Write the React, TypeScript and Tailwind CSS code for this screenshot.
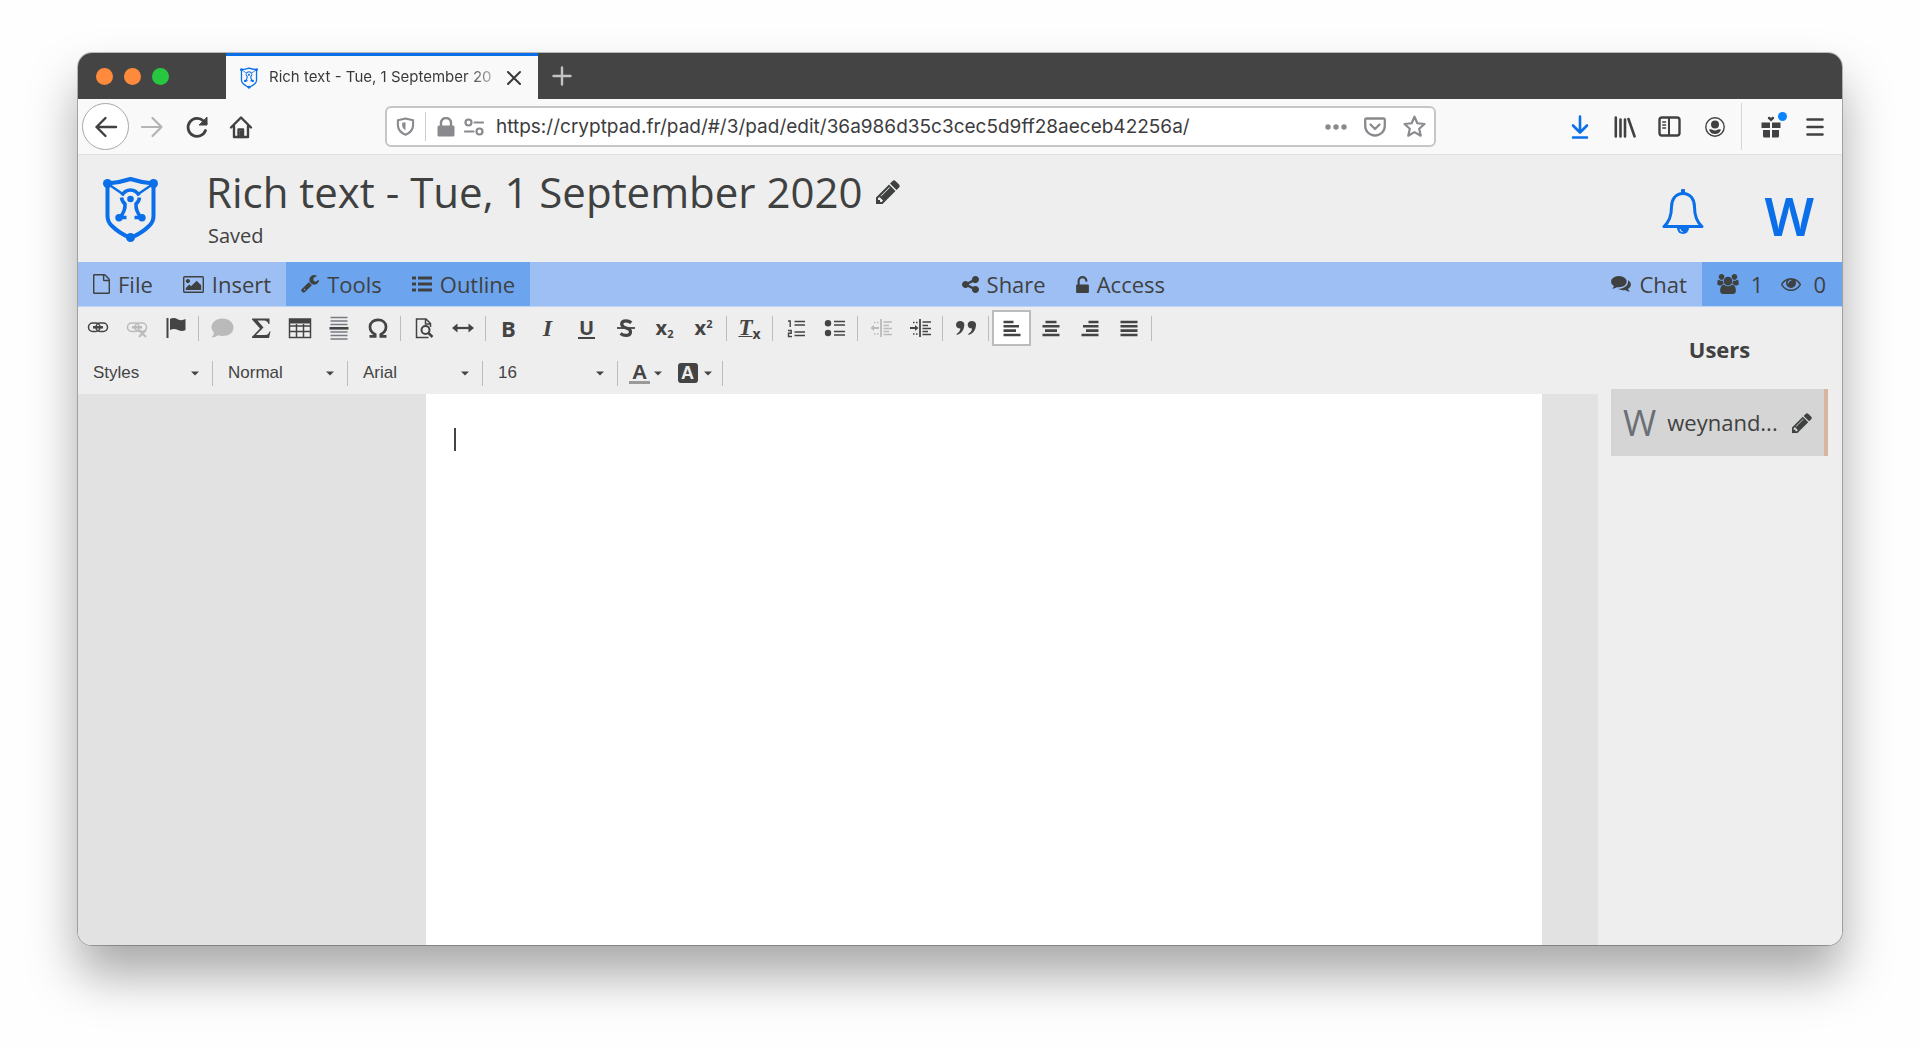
import React from "react";

type IconProps = { vb: string; d: string; cls: string };
const Glyph = ({ vb, d, cls }: IconProps) => (
  <svg viewBox={vb} className={cls} fill="currentColor" aria-hidden="true">
    <path d={d} />
  </svg>
);

const P = {
  pencil:
    "M491 1536l91-91-235-235-91 91v107h128v128h107zM1014 608q0-22-22-22-10 0-17 7l-542 542q-7 7-7 17 0 22 22 22 10 0 17-7l542-542q7-7 7-17zM960 416l416 416-832 832h-416v-416zM1643 512q0 53-37 90l-166 166-416-416 166-165q36-38 90-38 53 0 91 38l235 234q37 39 37 91z",
  file: "M1596 380q28 28 48 76t20 88v1152q0 40-28 68t-68 28h-1344q-40 0-68-28t-28-68v-1600q0-40 28-68t68-28h896q40 0 88 20t76 48zm-444-244v376h376q-10-29-22-41l-313-313q-12-12-41-22zm384 1528v-1024h-416q-40 0-68-28t-28-68v-416h-768v1536h1280z",
  picture:
    "M576 576q0 80-56 136t-136 56-136-56-56-136 56-136 136-56 136 56 56 136zm1024 384v448h-1408v-192l320-320 160 160 512-512zm96-704h-1600q-13 0-22.5 9.5t-9.5 22.5v1216q0 13 9.5 22.5t22.5 9.5h1600q13 0 22.5-9.5t9.5-22.5v-1216q0-13-9.5-22.5t-22.5-9.5zm160 32v1216q0 66-47 113t-113 47h-1600q-66 0-113-47t-47-113v-1216q0-66 47-113t113-47h1600q66 0 113 47t47 113z",
  wrench:
    "M448 1472q0-26-19-45t-45-19-45 19-19 45 19 45 45 19 45-19 19-45zm644-420l-682 682q-37 37-90 37-52 0-91-37l-106-108q-38-36-38-90 0-53 38-91l681-681q39 98 114.5 173.5t173.5 114.5zm634-435q0 39-23 106-47 134-164.5 217.5t-258.5 83.5q-185 0-316.5-131.5t-131.5-316.5 131.5-316.5 316.5-131.5q58 0 121.5 16.5t107.5 46.5q16 11 16 28t-16 28l-293 169v224l193 107q5-3 79-48.5t135.5-81 70.5-35.5q15 0 23.5 10t8.5 25z",
  share:
    "M1344 1024q133 0 226.5 93.5t93.5 226.5-93.5 226.5-226.5 93.5-226.5-93.5-93.5-226.5q0-12 2-34l-360-180q-92 86-218 86-133 0-226.5-93.5t-93.5-226.5 93.5-226.5 226.5-93.5q126 0 218 86l360-180q-2-22-2-34 0-133 93.5-226.5t226.5-93.5 226.5 93.5 93.5 226.5-93.5 226.5-226.5 93.5q-126 0-218-86l-360 180q2 22 2 34t-2 34l360 180q92-86 218-86z",
  unlock:
    "M1376 768q40 0 68 28t28 68v576q0 40-28 68t-68 28h-960q-40 0-68-28t-28-68v-576q0-40 28-68t68-28h32v-320q0-185 131.5-316.5t316.5-131.5 316.5 131.5 131.5 316.5q0 26-19 45t-45 19h-64q-26 0-45-19t-19-45q0-106-75-181t-181-75-181 75-75 181v320h736z",
  eye: "M1664 960q-152-236-381-353 61 104 61 225 0 185-131.5 316.5t-316.5 131.5-316.5-131.5-131.5-316.5q0-121 61-225-229 117-381 353 133 205 333.5 326.5t434.5 121.5 434.5-121.5 333.5-326.5zm-720-384q0-20-14-34t-34-14q-125 0-214.5 89.5t-89.5 214.5q0 20 14 34t34 14 34-14 14-34q0-86 61-147t147-61q20 0 34-14t14-34zm848 384q0 34-20 69-140 230-376.5 368.5t-499.5 138.5-499.5-139-376.5-368q-20-35-20-69t20-69q140-229 376.5-368t499.5-139 499.5 139 376.5 368q20 35 20 69z",
  users:
    "M529 896q-162 5-265 128h-134q-82 0-138-40.5t-56-118.5q0-353 124-353 6 0 43.5 21t97.5 42.5 119 21.5q67 0 133-23-5 37-5 66 0 139 81 256zm1071 637q0 120-73 189.5t-194 69.5h-874q-121 0-194-69.5t-73-189.5q0-53 3.5-103.5t14-109 26.5-108.5 43-97.5 62-81 85.5-53.5 111.5-20q10 0 43 21.5t73 48 107 48 135 21.5 135-21.5 107-48 73-48 43-21.5q61 0 111.5 20t85.5 53.5 62 81 43 97.5 26.5 108.5 14 109 3.5 103.5zm-1024-1277q0 106-75 181t-181 75-181-75-75-181 75-181 181-75 181 75 75 181zm704 384q0 159-112.5 271.5t-271.5 112.5-271.5-112.5-112.5-271.5 112.5-271.5 271.5-112.5 271.5 112.5 112.5 271.5zm576 225q0 78-56 118.5t-138 40.5h-134q-103-123-265-128 81-117 81-256 0-29-5-66 66 23 133 23 59 0 119-21.5t97.5-42.5 43.5-21q124 0 124 353zm-128-609q0 106-75 181t-181 75-181-75-75-181 75-181 181-75 181 75 75 181z",
  comments:
    "M1408 768q0 139-94 257t-256.5 186.5-353.5 68.5q-86 0-176-16-124 88-278 128-36 9-86 16h-3q-11 0-20.5-8t-11.5-21q-1-3-1-6.5t.5-6.5 2-6l2.5-5 3.5-5.5 4-5 4.5-5 4-4.5q5-6 23-25t26-29.5 22.5-29 25-38.5 20.5-44q-124-72-195-177t-71-224q0-139 94-257t256.5-186.5 353.5-68.5 353.5 68.5 256.5 186.5 94 257zm384 256q0 120-71 224.5t-195 176.5q10 24 20.5 44t25 38.5 22.5 29 26 29.5 23 25q1 1 4 4.5t4.5 5 4 5 3.5 5.5l2.5 5 2 6 .5 6.5-1 6.5q-3 14-13 22t-22 7q-50-7-86-16-154-40-278-128-90 16-176 16-271 0-472-132 58 4 88 4 161 0 309-45t264-129q125-92 192-212t67-254q0-77-23-152 129 71 204 178t75 230z",
};

const ShieldLogo = ({ cls }: { cls: string }) => (
  <svg viewBox="0 0 55 66" className={cls} fill="none" stroke="currentColor" aria-hidden="true">
    <path d="M4.500 7.500 Q17 6.500 27.500 3 Q38 6.500 50.500 7.500 V40 Q50.500 46 46 50 Q39 57 27.500 62 Q16 57 9 50 Q4.500 46 4.500 40 Z" strokeWidth="4" strokeLinejoin="round" />
    <path d="M5 8 L20.500 18.500 M50 8 L34.500 18.500" strokeWidth="2.400" />
    <path d="M19 19.500 Q22 14 27.500 14 Q33 14 36 19.500" strokeWidth="3.400" />
    <path d="M18.500 21.500 Q19 25.500 22 28 Q22.500 35 17 41.500 H23.500 M36.500 21.500 Q36 25.500 33 28 Q32.500 35 38 41.500 H31.500" strokeWidth="3.600" strokeLinejoin="round" />
    <g fill="currentColor" stroke="none">
      <circle cx="4.500" cy="7.500" r="4.500" />
      <circle cx="50.500" cy="7.500" r="4.500" />
      <circle cx="27.500" cy="61.500" r="4.500" />
      <circle cx="27.500" cy="23" r="3.300" />
      <circle cx="16" cy="41.800" r="3.700" />
      <circle cx="39" cy="41.800" r="3.700" />
    </g>
  </svg>
);

const Stroke = ({ d, cls, w = 2, vb = "0 0 24 24", children }: { d?: string; cls: string; w?: number; vb?: string; children?: React.ReactNode }) => (
  <svg viewBox={vb} className={cls} fill="none" stroke="currentColor" strokeWidth={w} strokeLinecap="round" strokeLinejoin="round" aria-hidden="true">
    {d && <path d={d} />}
    {children}
  </svg>
);

const NavButton = ({ label, children, cls = "w-[45px]" }: { label: string; children: React.ReactNode; cls?: string }) => (
  <button type="button" aria-label={label} className={`flex h-10 shrink-0 items-center justify-center ${cls}`}>
    {children}
  </button>
);

const TabBar = () => (
  <div className="flex h-[46px] shrink-0 bg-[#444444]">
    <div className="flex w-[148px] shrink-0 items-center gap-[11px] pl-[18px]">
      <span className="size-[17px] rounded-full bg-[#ff8a3c]" />
      <span className="size-[17px] rounded-full bg-[#ff8a3c]" />
      <span className="size-[17px] rounded-full bg-[#27c840]" />
    </div>
    <div className="flex w-[312px] shrink-0 items-center border-t-3 border-[#0a6fe8] bg-[#f9f9f9] pl-[14px] text-[#38383a]">
      <ShieldLogo cls="h-[22px] w-[18px] shrink-0 text-[#0a6fe8]" />
      <span className="ml-[11px] w-[232px] shrink-0 bg-linear-to-r from-[#38383a] from-85% to-[#d8d8d8] bg-clip-text text-[15px] whitespace-nowrap text-transparent">
        Rich text - Tue, 1 September 20
      </span>
      <button type="button" aria-label="Close tab" className="ml-1">
        <Stroke cls="size-[18px]" vb="0 0 18 18" d="M3 3 L15 15 M15 3 L3 15" />
      </button>
    </div>
    <button type="button" aria-label="New tab" className="ml-[14px] text-[#c4c4c4]">
      <Stroke cls="size-5" vb="0 0 20 20" w={2.4} d="M10 1.500 V18.500 M1.500 10 H18.500" />
    </button>
  </div>
);

const AddressBar = () => (
  <div className="flex h-14 shrink-0 items-center border-b border-[#e0e0e0] bg-[#f9f9f9] text-[#414143]">
    <div className="flex w-[307px] shrink-0 items-center pl-1">
      <button type="button" aria-label="Back" className="flex size-[47px] items-center justify-center rounded-full border border-[#a8a8a8] bg-white">
        <Stroke cls="size-6" w={2.4} d="M22 12 H2.500 M11.500 3 L2.500 12 L11.500 21" />
      </button>
      <NavButton label="Forward">
        <Stroke cls="size-6 text-[#b4b4b6]" w={2.2} d="M2 12 H21.500 M12.500 3 L21.500 12 L12.500 21" />
      </NavButton>
      <NavButton label="Reload">
        <Stroke cls="size-6" w={2.8} d="M20.500 15.500 A9 9 0 1 1 18.500 6 L21 8.500">
          <path d="M22 2.500 V10 H14.500 Z" fill="currentColor" strokeWidth="1" />
        </Stroke>
      </NavButton>
      <NavButton label="Home" cls="w-[43px]">
        <Stroke cls="size-6" w={2.4} d="M2 12.500 L12 2.500 L22 12.500 M5 11 V22 H19 V11">
          <path d="M9.500 22 V14.500 H14 V22 M12 17 V22" />
        </Stroke>
      </NavButton>
    </div>
    <div className="flex h-[41px] min-w-0 flex-1 items-center rounded-md border-2 border-[#c6c6c6] bg-white text-[#8a8a8e]">
      <Stroke cls="ml-[9px] size-[19px] shrink-0" vb="0 0 20 20" w={2.2} d="M10 1.500 L18 3.500 V9 Q17.500 15.500 10 18.700 Q2.500 15.500 2 9 V3.500 Z">
        <path d="M10 5.500 V14 Q6.500 12 6.500 9 V6 Z" fill="currentColor" stroke="none" />
      </Stroke>
      <span className="ml-[10px] h-[29px] w-px bg-[#cfcfcf]" />
      <svg viewBox="0 0 18 20" className="ml-[11px] h-5 w-[18px] shrink-0" fill="currentColor" aria-hidden="true">
        <rect x="0.500" y="8.500" width="17" height="11" rx="1.500" />
        <path d="M4 9 V6 A5 5 0 0 1 14 6 V9" fill="none" stroke="currentColor" strokeWidth="2.400" />
      </svg>
      <Stroke cls="ml-[9px] h-[18px] w-5 shrink-0" vb="0 0 20 18" w={2.2} d="M10.500 4.500 H19 M1 13.500 H9.500">
        <circle cx="4.500" cy="4.500" r="3" />
        <circle cx="15.500" cy="13.500" r="3" />
      </Stroke>
      <input
        aria-label="Address"
        readOnly
        value="https://cryptpad.fr/pad/#/3/pad/edit/36a986d35c3cec5d9ff28aeceb42256a/"
        className="ml-3 min-w-0 flex-1 bg-transparent pt-[2px] text-[19px] text-[#3c3c3e] outline-none"
      />
      <div className="flex items-center gap-[17px] pr-2">
        <button type="button" aria-label="Page actions">
          <svg viewBox="0 0 22 6" className="h-[6px] w-[22px]" fill="currentColor">
            <circle cx="3" cy="3" r="2.700" />
            <circle cx="11" cy="3" r="2.700" />
            <circle cx="19" cy="3" r="2.700" />
          </svg>
        </button>
        <button type="button" aria-label="Save to Pocket">
          <Stroke cls="h-5 w-[22px]" vb="0 0 22 20" w={2.3} d="M2.500 1.500 H19.500 Q20.800 1.500 20.800 3 V9 A9.800 9.500 0 0 1 1.200 9 V3 Q1.200 1.500 2.500 1.500 Z M6.500 7.500 L11 12 L15.500 7.500" />
        </button>
        <button type="button" aria-label="Bookmark this page">
          <Stroke cls="size-[23px]" w={2.3} d="M12 1.800 L15 8.600 L22.400 9.400 L16.900 14.300 L18.500 21.600 L12 17.900 L5.500 21.600 L7.100 14.300 L1.600 9.400 L9 8.600 Z" />
        </button>
      </div>
    </div>
    <div className="flex shrink-0 items-center pl-[121px]">
      <NavButton label="Downloads">
        <Stroke cls="h-6 w-[18px] text-[#0a6fe8]" vb="0 0 18 24" w={2.6} d="M9 1.500 V17 M2 10.500 L9 17.500 L16 10.500 M2 22.500 H16" />
      </NavButton>
      <NavButton label="Library">
        <Stroke cls="h-[22px] w-[22px]" vb="0 0 22 22" w={2.6} d="M1.800 1.500 V20.500 M6.500 3.500 V20.500 M11 3.500 V20.500 M14.500 3 L20.500 20.300" />
      </NavButton>
      <NavButton label="Sidebars">
        <Stroke cls="h-[21px] w-[23px]" vb="0 0 23 21" w={2.4}>
          <rect x="1.500" y="1.500" width="20" height="18" rx="2.500" />
          <path d="M11 2 V19" strokeWidth="2" />
          <path d="M4.800 6 H7.500 M4.800 9 H7.500 M4.800 12 H7.500" strokeWidth="1.500" />
        </Stroke>
      </NavButton>
      <NavButton label="Account">
        <svg viewBox="0 0 20 20" className="size-5" fill="currentColor">
          <circle cx="10" cy="10" r="9.200" fill="none" stroke="currentColor" strokeWidth="1.400" />
          <circle cx="10" cy="7.500" r="4" />
          <path d="M4 12.500 Q6 12 7 12.500 Q10 14.300 13 12.500 Q14 12 16 12.500 Q14.500 17 10 17 Q5.500 17 4 12.500 Z" />
        </svg>
      </NavButton>
      <span className="ml-[4px] h-[47px] w-px bg-[#d6d6d6]" />
      <button type="button" aria-label="What's new" className="relative ml-[19px] h-[22px] w-5">
        <svg viewBox="0 0 20 22" className="h-[22px] w-5" fill="currentColor">
          <path d="M0.500 6.500 H9 V12 H0.500 Z M11 6.500 H19.500 V12 H11 Z M2 14 H9 V21.500 H3.500 Q2 21.500 2 20 Z M11 14 H18 V20 Q18 21.500 16.500 21.500 H11 Z" />
          <path d="M10 5.500 L6.800 2.600 Q6.500 0.500 8.500 0.800 Q9.500 1 10 2 Q10.500 1 11.500 0.800 Q13.500 0.500 13.200 2.600 Z" />
        </svg>
        <span className="absolute -top-1 -right-[6px] size-[9px] rounded-full bg-[#0a84ff]" />
      </button>
      <NavButton label="Menu" cls="ml-[7px] w-[54px]">
        <Stroke cls="h-5 w-[18px]" vb="0 0 18 20" w={2.6} d="M1.500 2.500 H16.500 M1.500 10 H16.500 M1.500 17.500 H16.500" />
      </NavButton>
    </div>
  </div>
);

const Header = () => (
  <header className="flex h-[107px] shrink-0 items-start bg-[#eeeeee] pl-[25px] text-[#3f4141]">
    <a href="#home" aria-label="Home" className="mt-[21px] text-[#0a6fe8]">
      <ShieldLogo cls="h-[66px] w-[55px]" />
    </a>
    <div className="ml-[48px] flex-1">
      <div className="flex items-center gap-[13px] pt-[5px]">
        <h1 className="text-[42px] leading-[64px]">Rich text - Tue, 1 September 2020</h1>
        <button type="button" aria-label="Rename">
          <Glyph vb="128 128 1536 1536" d={P.pencil} cls="size-6" />
        </button>
      </div>
      <p className="-mt-[2px] pl-[2px] text-[20px] leading-[28px]">Saved</p>
    </div>
    <button type="button" aria-label="Notifications" className="mt-[34px] text-[#0a6fe8]">
      <svg viewBox="0 0 42 46" className="h-[46px] w-[42px]" fill="none" stroke="currentColor" strokeWidth="3" strokeLinejoin="round">
        <path d="M21 4.500 C13 4.500 9.500 11 9.500 18 C9.500 28 7 33 2 37.500 H40 C35 33 32.500 28 32.500 18 C32.500 11 29 4.500 21 4.500 Z" />
        <path d="M21 1.500 V4" strokeLinecap="round" strokeWidth="4" />
        <path d="M15 39 H27 A6 6 0 0 1 15 39 Z" fill="currentColor" stroke="none" />
        <path d="M18 40 Q18.500 42.500 20.500 42.800" stroke="#eeeeee" strokeWidth="1.200" />
      </svg>
    </button>
    <button type="button" aria-label="Account menu" className="mt-[26px] mr-[28px] ml-[60px] font-['Noto_Sans',sans-serif] text-[52px] leading-[70px] font-semibold text-[#0a6fe8]">
      W
    </button>
  </header>
);

const BarButton = ({ icon, children }: { icon: React.ReactNode; children: React.ReactNode }) => (
  <button type="button" className="flex h-full shrink-0 items-center gap-2 px-[15px]">
    {icon}
    {children}
  </button>
);

const ActionBar = () => (
  <nav className="flex h-[45px] shrink-0 justify-between border-b border-[#bcd3f5] bg-[#9dbff4] text-[22px] leading-[32px] text-[#3f4141]">
    <div className="flex">
      <BarButton icon={<Glyph vb="128 0 1536 1792" d={P.file} cls="h-5 w-[17px]" />}>File</BarButton>
      <BarButton icon={<Glyph vb="-64 128 1920 1536" d={P.picture} cls="h-[17px] w-[21px]" />}>Insert</BarButton>
      <div className="flex bg-[#6ca4ee]">
        <BarButton icon={<Glyph vb="64 128 1664 1664" d={P.wrench} cls="size-[18px]" />}>Tools</BarButton>
        <BarButton
          icon={
            <svg viewBox="0 0 20 16" className="h-4 w-5" fill="currentColor" aria-hidden="true">
              <path d="M0 0.500h4v3H0zM6 0.500h14v3H6zM0 6.500h4v3H0zM6 6.500h14v3H6zM0 12.500h4v3H0zM6 12.500h14v3H6z" />
            </svg>
          }
        >
          Outline
        </BarButton>
      </div>
    </div>
    <div className="flex">
      <BarButton icon={<Glyph vb="128 128 1536 1536" d={P.share} cls="size-[17px]" />}>Share</BarButton>
      <BarButton icon={<Glyph vb="320 0 1152 1536" d={P.unlock} cls="h-[17px] w-[13px]" />}>Access</BarButton>
    </div>
    <div className="flex">
      <BarButton icon={<Glyph vb="0 256 1792 1536" d={P.comments} cls="h-[17px] w-5" />}>Chat</BarButton>
      <div className="flex items-center gap-3 bg-[#6ca4ee] pr-4 pl-[15px]">
        <Glyph vb="-64 0 1920 1792" d={P.users} cls="h-5 w-[22px]" />
        <span>1</span>
        <Glyph vb="0 384 1792 1152" d={P.eye} cls="ml-[6px] h-[13px] w-5" />
        <span>0</span>
      </div>
    </div>
  </nav>
);

const Sep = () => (
  <span className="flex w-[7px] shrink-0 justify-center">
    <span className="h-[25px] w-px bg-[#bcbcbc]" />
  </span>
);

const Tool = ({ label, children, active = false, disabled = false }: { label: string; children: React.ReactNode; active?: boolean; disabled?: boolean }) => (
  <button
    type="button"
    aria-label={label}
    disabled={disabled}
    className={`flex h-9 w-[39px] shrink-0 items-center justify-center disabled:opacity-30 ${active ? "border-2 border-[#bcbcbc] bg-white" : ""}`}
  >
    {children}
  </button>
);

const Ico = ({ children }: { children: React.ReactNode }) => (
  <svg viewBox="0 0 24 24" className="size-6" fill="none" stroke="currentColor" strokeWidth="2" aria-hidden="true">
    {children}
  </svg>
);

const chain = (
  <g strokeWidth="1.500">
    <rect x="2.500" y="7" width="11.500" height="8.500" rx="4.200" />
    <rect x="10" y="7" width="11.500" height="8.500" rx="4.200" />
    <path d="M7 11.300 H17" strokeWidth="2.500" />
  </g>
);

const IndentLines = () => (
  <>
    <path d="M12 3 V21" strokeWidth="1.800" />
    <path d="M14.500 6 H23 M14.500 9.500 H20 M14.500 12.500 H23 M14.500 15.500 H20 M14.500 18.500 H23" strokeWidth="1.500" />
    <path d="M5 6.500 H10 M5 18 H10" strokeDasharray="1.500 1.500" strokeWidth="1.500" />
  </>
);

const EditTools = () => (
  <div className="flex h-[42px] items-center font-['Open_Sans',sans-serif] text-[22px] leading-6 font-bold">
    <Tool label="Link"><Ico>{chain}</Ico></Tool>
    <Tool label="Unlink" disabled><Ico>{chain}<path d="M14 14 L21 21 M21 14 L14 21" /></Ico></Tool>
    <Tool label="Anchor"><Ico><path d="M3.500 2 V22" /><path d="M6 3 Q10 1 14 3.500 Q18 5 21.500 3 V14 Q18 16 14 14 Q10 12 6 14 Z" fill="currentColor" stroke="none" /></Ico></Tool>
    <Sep />
    <Tool label="Comment" disabled><Ico><path d="M12.500 2.500 C19 2.500 23.500 6.500 23.500 11.500 C23.500 16.500 19 20 12.500 20 Q10 20 8 19.300 Q5 21.500 1.500 21.500 Q3.800 19.500 4 17 Q1.500 14.500 1.500 11.500 C1.500 6.500 6 2.500 12.500 2.500 Z" fill="currentColor" stroke="none" /></Ico></Tool>
    <Tool label="Math"><Ico><path d="M3 2.500 H20.500 V8 H19.500 Q18.500 4.500 15 4.500 H8.500 L14.500 11.500 L7 19 H16 Q19.500 19 20.500 15.500 H21.500 L20 22 H3 V20.800 L11 12.500 L3 3.500 Z" fill="currentColor" stroke="none" /></Ico></Tool>
    <Tool label="Table"><Ico><path d="M1.500 3 H22.500 V21.500 H1.500 Z M1.500 10 H22.500 M1.500 15.500 H22.500 M8.500 8 V21 M15.500 8 V21" strokeWidth="1.500" /><path d="M1 3 H23 V7.500 H1 Z" fill="currentColor" stroke="none" /></Ico></Tool>
    <Tool label="Page break"><Ico><path d="M3.500 1.500 H20.500 M3.500 5 H20.500 M3.500 8.500 H20.500 M3.500 16 H20.500 M3.500 19.500 H20.500 M3.500 23 H20.500" strokeWidth="1.300" stroke="#777b84" /><path d="M2.500 12.300 H21.500" strokeWidth="2.600" /></Ico></Tool>
    <Tool label="Special character"><Ico><path d="M3.500 20.300 H9.200 V18.500 C5.500 16.500 4 14 4 11 C4 6.500 7.500 3.800 12 3.800 C16.500 3.800 20 6.500 20 11 C20 14 18.500 16.500 14.800 18.500 V20.300 H20.500" strokeWidth="2.700" /></Ico></Tool>
    <Sep />
    <Tool label="Preview"><Ico><path d="M16.500 21.500 H4.500 V3 H14 L18.500 7.500 V11 M13.500 3 V8 H18.500" strokeWidth="1.500" /><circle cx="13.500" cy="14" r="4" /><path d="M16.500 17 L20.500 21" strokeWidth="2.500" /></Ico></Tool>
    <Tool label="Full width"><Ico><path d="M5 12 H19" strokeWidth="2.200" /><path d="M1 12 L6.500 7.500 V16.500 Z M23 12 L17.500 7.500 V16.500 Z" fill="currentColor" stroke="none" /></Ico></Tool>
    <Sep />
    <Tool label="Bold">B</Tool>
    <Tool label="Italic"><span className="font-['Liberation_Serif',serif] text-[24px] italic">I</span></Tool>
    <Tool label="Underline"><span className="border-b-2 border-current px-px text-[20px] leading-[19px]">U</span></Tool>
    <Tool label="Strikethrough"><Ico><path d="M3 12 H21" strokeWidth="1.800" /><path d="M17.300 6.800 Q15 4.800 12 4.800 C9 4.800 7.700 6.300 7.700 7.900 C7.700 10.500 10 11.300 12.300 12 C15 12.800 16.500 13.800 16.500 15.800 C16.500 18.200 14.500 19.400 12 19.400 Q9 19.400 6.500 17.500" strokeWidth="3.200" /></Ico></Tool>
    <Tool label="Subscript"><span className="text-[20px]">x</span><span className="mt-3 text-[11px] leading-3">2</span></Tool>
    <Tool label="Superscript"><span className="text-[20px]">x</span><span className="mb-2 text-[11px] leading-3">2</span></Tool>
    <Sep />
    <Tool label="Remove format"><span className="font-['Liberation_Serif',serif] text-[23px] leading-5 italic underline decoration-1">T</span><span className="mt-3 text-[14px] leading-3">x</span></Tool>
    <Sep />
    <Tool label="Numbered list"><Ico><path d="M10.500 5.500 H21 M10.500 9 H21 M10.500 16 H21 M10.500 19.500 H21" strokeWidth="1.700" /><path d="M4 5 H6.200 V11 M4 14.500 H7.200 V17.300 H4.500 V20.500 H8" strokeWidth="1.400" /></Ico></Tool>
    <Tool label="Bulleted list"><Ico><path d="M11 5.500 H22 M11 9 H22 M11 15.500 H22 M11 19 H22" strokeWidth="1.700" /><g fill="currentColor" stroke="none"><circle cx="5" cy="7.300" r="3.200" /><circle cx="5" cy="17" r="3.200" /></g></Ico></Tool>
    <Sep />
    <Tool label="Decrease indent" disabled><Ico><IndentLines /><path d="M4 12 H10" /><path d="M1.500 12 L5 9 V15 Z" fill="currentColor" stroke="none" /></Ico></Tool>
    <Tool label="Increase indent"><Ico><IndentLines /><path d="M2 12 H8" /><path d="M10.500 12 L7 9 V15 Z" fill="currentColor" stroke="none" /></Ico></Tool>
    <Sep />
    <Tool label="Block quote"><Ico><path d="M10.300 8.500 C10.300 14 7.500 17.500 3 19 L2.500 18 C5 16.500 6.300 14.800 6.300 12.500 C3.500 12.500 2 11 2 8.800 C2 6.500 3.800 5 6 5 C8.700 5 10.300 6.500 10.300 8.500 Z M22 8.500 C22 14 19.200 17.500 14.700 19 L14.200 18 C16.700 16.500 18 14.800 18 12.500 C15.200 12.500 13.700 11 13.700 8.800 C13.700 6.500 15.500 5 17.700 5 C20.400 5 22 6.500 22 8.500 Z" fill="currentColor" stroke="none" /></Ico></Tool>
    <Sep />
    <Tool label="Align left" active><Ico><path d="M3.500 6 H13.500 M3.500 10.300 H19 M3.500 14.600 H16 M3.500 19 H20.500" strokeWidth="2.600" /></Ico></Tool>
    <Tool label="Center"><Ico><path d="M6.500 6 H17.500 M3.500 10.300 H20.500 M6 14.600 H18 M3.500 19 H20.500" strokeWidth="2.600" /></Ico></Tool>
    <Tool label="Align right"><Ico><path d="M10.500 6 H20.500 M5 10.300 H20.500 M8 14.600 H20.500 M3.500 19 H20.500" strokeWidth="2.600" /></Ico></Tool>
    <Tool label="Justify"><Ico><path d="M3.500 6 H20.500 M3.500 10.300 H20.500 M3.500 14.600 H20.500 M3.500 19 H20.500" strokeWidth="2.600" /></Ico></Tool>
    <Sep />
  </div>
);

const Caret = () => (
  <svg viewBox="0 0 8 5" className="h-[5px] w-2 shrink-0" fill="currentColor" aria-hidden="true">
    <path d="M0 0.500 H8 L4 4.500 Z" />
  </svg>
);

const Combo = ({ label, value }: { label: string; value: string }) => (
  <>
    <label className="relative flex h-9 w-[128px] shrink-0 items-center">
      <select aria-label={label} defaultValue={value} className="h-full w-full appearance-none bg-transparent pl-3 outline-none">
        <option>{value}</option>
      </select>
      <span className="pointer-events-none absolute right-[10px]"><Caret /></span>
    </label>
    <Sep />
  </>
);

const FormatTools = () => (
  <div className="flex h-[45px] items-center pt-[3px] pl-[3px] font-['Liberation_Sans',sans-serif] text-[17px]">
    <Combo label="Styles" value="Styles" />
    <Combo label="Paragraph format" value="Normal" />
    <Combo label="Font" value="Arial" />
    <Combo label="Size" value="16" />
    <button type="button" aria-label="Text colour" className="flex h-9 w-[49px] items-center justify-center gap-1">
      <span className="w-[21px] border-b-3 border-[#9a9a9a] text-center text-[21px] leading-[18px] font-bold">A</span>
      <Caret />
    </button>
    <button type="button" aria-label="Background colour" className="flex h-9 w-[49px] items-center justify-center gap-[6px]">
      <span className="h-5 w-5 rounded-[3px] bg-[#444444] text-center text-[18px] leading-5 font-bold text-[#eeeeee]">A</span>
      <Caret />
    </button>
    <Sep />
  </div>
);

export default function App() {
  return (
    <div className="flex min-h-screen flex-col bg-[#fefefe] px-[78px] pt-[53px] pb-[104px] font-['Inter',sans-serif]">
      <div className="flex flex-1 flex-col overflow-hidden rounded-[14px] shadow-[0_0_0_1px_rgba(0,0,0,0.25),0_30px_50px_rgba(0,0,0,0.34)]">
        <TabBar />
        <AddressBar />
        <div className="flex flex-1 flex-col bg-[#eeeeee] font-['Open_Sans',sans-serif]">
          <Header />
          <ActionBar />
          <div className="flex flex-1">
            <main className="flex min-w-0 flex-1 flex-col text-[#444444]">
              <div>
                <EditTools />
                <FormatTools />
              </div>
              <div className="flex flex-1 bg-[#e2e2e2] pr-[56px] pl-[348px]">
                <div role="textbox" aria-label="Document" tabIndex={0} className="flex-1 bg-white px-7 pt-[34px] outline-none">
                  <span className="block h-[23px] w-[2px] bg-[#444444]" />
                </div>
              </div>
            </main>
            <aside className="w-[244px] shrink-0 pr-[14px] pl-[13px] text-[#3f4141]">
              <h2 className="pt-[26px] text-center text-[22px] leading-8 font-bold">Users</h2>
              <div className="mt-6 flex h-[67px] items-center border-r-4 border-[#d8b5a0] bg-[#d5d5d5] pl-3">
                <span className="text-[36px] leading-10 text-[#6b6f76]">W</span>
                <span className="ml-[11px] flex-1 text-[22px]">weynand...</span>
                <button type="button" aria-label="Edit name" className="mr-3">
                  <Glyph vb="128 128 1536 1536" d={P.pencil} cls="size-5" />
                </button>
              </div>
            </aside>
          </div>
        </div>
      </div>
    </div>
  );
}
